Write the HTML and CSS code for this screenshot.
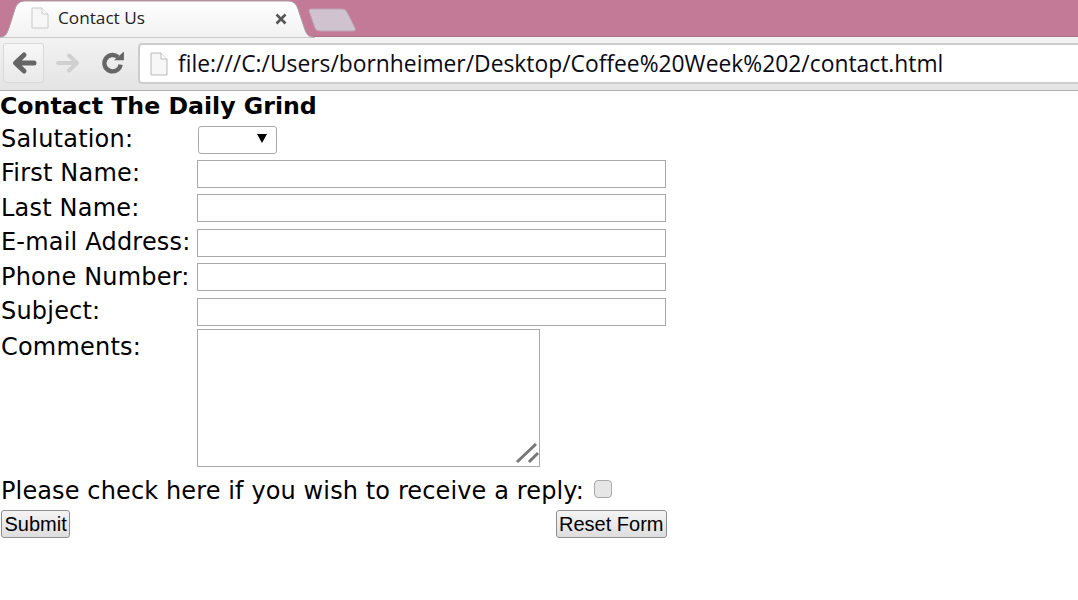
FILE: index.html
```html
<!DOCTYPE html>
<html lang="en">
<head>
<meta charset="utf-8">
<title>Contact Us</title>
<link rel="stylesheet" href="styles.css">
</head>
<body>
<header class="browser">
  <div class="tabstrip">
    <div class="tab">
      <svg class="tab-shape" width="320" height="38" viewBox="0 0 320 38"><path d="M0 37 C6 37 7 33 9 28 L15 9 C17 3 20 1 26 1 H287 C293 1 296 3 298 9 L305 30 C307 35 309 37 314 37 V38 H0 Z" fill="url(#tabfill)" stroke="#a9a0a5" stroke-width="1"/><defs><linearGradient id="tabfill" x1="0" y1="0" x2="0" y2="1"><stop offset="0" stop-color="#fff"/><stop offset="1" stop-color="#f1f1f1"/></linearGradient></defs></svg>
      <svg class="page-icon" width="18" height="22" viewBox="0 0 18 22"><path d="M1 1 H11 L17 7 V21 H1 Z" fill="#f7f7f7" stroke="#c9c9c9"/><path d="M11 1 V7 H17" fill="#fff" stroke="#c9c9c9"/></svg>
      <span class="tab-title">Contact Us</span>
      <svg class="tab-close" width="12" height="12" viewBox="0 0 12 12"><path d="M1.5 1.5 L10.5 10.5 M10.5 1.5 L1.5 10.5" stroke="#555" stroke-width="2.6"/></svg>
    </div>
    <svg class="new-tab" width="48" height="24" viewBox="0 0 48 24"><path d="M1 3 C1 1 2 1 4 1 H34 C37 1 38 2 39 4 L47 20 C48 22 47 23 45 23 H12 C9 23 8 22 7 20 Z" fill="#d1c2d0" stroke="#b9a3b4"/></svg>
  </div>
  <div class="toolbar">
    <button class="nav-btn nav-back" type="button" aria-label="Back">
      <svg width="26" height="24" viewBox="0 0 26 24"><path d="M23 12 H6 M13 4 L4.5 12 L13 20" fill="none" stroke="#666" stroke-width="5" stroke-linecap="round" stroke-linejoin="round"/></svg>
    </button>
    <span class="nav-btn nav-forward">
      <svg width="26" height="24" viewBox="0 0 26 24"><path d="M2 12 H20 M13 4.5 L21 12 L13 19.5" fill="none" stroke="#d0d0d0" stroke-width="4" stroke-linecap="round" stroke-linejoin="round"/></svg>
    </span>
    <span class="nav-btn nav-reload">
      <svg width="22" height="22" viewBox="0 0 22 22"><path d="M18 12.5 A7.5 7.5 0 1 1 15.5 5.5" fill="none" stroke="#666" stroke-width="4"/><path d="M12 8.5 H21 V0.5 Z" fill="#666"/></svg>
    </span>
    <div class="omnibox">
      <svg class="page-icon-url" width="18" height="24" viewBox="0 0 18 24"><path d="M1 1 H11 L17 7 V23 H1 Z" fill="#f7f7f7" stroke="#b9b9b9"/><path d="M11 1 V7 H17" fill="#fff" stroke="#b9b9b9"/></svg>
      <span class="url">file:///C:/Users/bornheimer/Desktop/Coffee%20Week%202/contact.html</span>
    </div>
  </div>
</header>
<main class="page">
  <h1 class="title">Contact The Daily Grind</h1>
  <form class="contact">
    <div class="fields">
      <label class="lbl" for="sal">Salutation:</label>
      <div class="cell sel-cell"><select id="sal" class="sel"><option></option><option>Mr.</option><option>Ms.</option></select></div>
      <label class="lbl" for="fn">First Name:</label>
      <div class="cell"><input id="fn" class="txt" type="text"></div>
      <label class="lbl" for="ln">Last Name:</label>
      <div class="cell"><input id="ln" class="txt" type="text"></div>
      <label class="lbl" for="em">E-mail Address:</label>
      <div class="cell"><input id="em" class="txt" type="text"></div>
      <label class="lbl" for="ph">Phone Number:</label>
      <div class="cell"><input id="ph" class="txt" type="text"></div>
      <label class="lbl" for="su">Subject:</label>
      <div class="cell"><input id="su" class="txt" type="text"></div>
      <label class="lbl" for="co">Comments:</label>
      <div class="cell area-cell">
        <textarea id="co" class="area"></textarea>
        <svg class="grip" width="24" height="22" viewBox="0 0 24 22"><path d="M2 20 L21 2 M14 20 L23 11" stroke="#777" stroke-width="3" fill="none"/></svg>
      </div>
    </div>
    <div class="reply">
      <label class="lbl-reply" for="re">Please check here if you wish to receive a reply:</label>
      <input id="re" class="check" type="checkbox">
    </div>
    <div class="actions">
      <button class="btn" type="submit">Submit</button>
      <button class="btn" type="reset">Reset Form</button>
    </div>
  </form>
</main>
</body>
</html>
```
FILE: styles.css
```css
* { box-sizing: border-box; }
html, body { margin: 0; padding: 0; background: #fff; }
body { width: 1078px; height: 600px; overflow: hidden; font-family: "DejaVu Sans", sans-serif; color: #000; }

.browser { height: 91px; display: flex; flex-direction: column; border-bottom: 1px solid #b0b0b0; }
.tabstrip { height: 37px; flex: none; background: #c27a96; display: flex; border-bottom: 1px solid #a9707f; }
.tab { position: relative; width: 307px; height: 37px; display: flex; align-items: center; padding: 0 0 0 31px; }
.tab-shape { position: absolute; left: 0; top: 0; }
.page-icon, .tab-title, .tab-close { position: relative; }
.page-icon { margin-top: -1px; }
.tab-title { font: 17.2px "Open Sans", sans-serif; color: #222; margin-left: 9px; margin-top: -2px; width: 217px; }
.new-tab { margin: 8px 0 0 1px; flex: none; }

.toolbar { flex: 1; display: flex; align-items: flex-start; padding: 6px 0 0 3px; background: linear-gradient(#f3f3f3, #e4e4e4); }
.nav-btn { width: 41px; height: 40px; flex: none; display: flex; align-items: center; justify-content: center; padding: 0; background: none; border: 1px solid transparent; border-radius: 3px; }
.nav-back { border-color: #d9d9d9; background: linear-gradient(#f7f7f7, #e9e9e9); }
.nav-forward { width: 40px; padding-left: 10px; }
.nav-reload { width: 47px; padding-left: 14px; margin-left: -2px; }
.nav-reload svg { width: 24px; height: 24px; }
.omnibox { flex: 1; margin-left: 9px; margin-right: -20px; height: 41px; display: flex; align-items: center; padding-left: 10px; background: #fff; border: 2px solid #cdcdcd; border-radius: 4px; }
.url { font: 22.83px "Open Sans", sans-serif; color: #0a0a14; margin-left: 10px; white-space: nowrap; }

.page { display: block; }
.title { margin: 0; padding-top: 1px; font-size: 23.65px; line-height: 29px; font-weight: bold; }
.contact { display: block; width: 667px; }
.fields { display: grid; grid-template-columns: 197px 1fr; grid-template-rows: 34.5px 34.5px 34.5px 34.5px 34.5px 35.5px 140px; }
.lbl { font-size: 24px; line-height: 30px; padding: 2.5px 0 0 1px; letter-spacing: 0.2px; white-space: nowrap; }
.cell { min-width: 0; }
.sel-cell { position: relative; }
.sel-cell::after { content: ""; position: absolute; left: 60px; top: 13px; border-style: solid; border-width: 9px 5px 0; border-color: #000 transparent transparent; pointer-events: none; }
.sel { display: block; width: 79px; height: 28px; margin: 5px 0 0 1px; appearance: none; background: #fff; border: 1px solid #a9a9a9; border-radius: 3px; }
.txt { display: block; width: 469px; height: 28px; margin: 4.4px 0 0 0; padding: 0 4px; background: #fff; border: 1px solid #a9a9a9; border-radius: 0; }
.area-cell { position: relative; }
.area { display: block; width: 343px; height: 138px; margin: 0; background: #fff; border: 1px solid #a9a9a9; border-radius: 0; resize: none; }
.grip { position: absolute; left: 318px; top: 113px; }
.reply { display: flex; align-items: flex-start; height: 41px; }
.lbl-reply { font-size: 24px; line-height: 30px; padding: 7px 0 0 1px; letter-spacing: 0.12px; white-space: nowrap; }
.check { appearance: none; width: 18px; height: 18px; margin: 11px 0 0 10px; background: #e6e6e6; border: 1px solid #a9a9a9; border-radius: 4px; }
.actions { display: flex; justify-content: space-between; padding-left: 1px; }
.btn { height: 28px; padding: 0 2.5px; font: 20px "Liberation Sans", sans-serif; color: #000; background: linear-gradient(#f4f4f4, #dedede); border: 1px solid #8f8f8f; border-radius: 3px; }
```
